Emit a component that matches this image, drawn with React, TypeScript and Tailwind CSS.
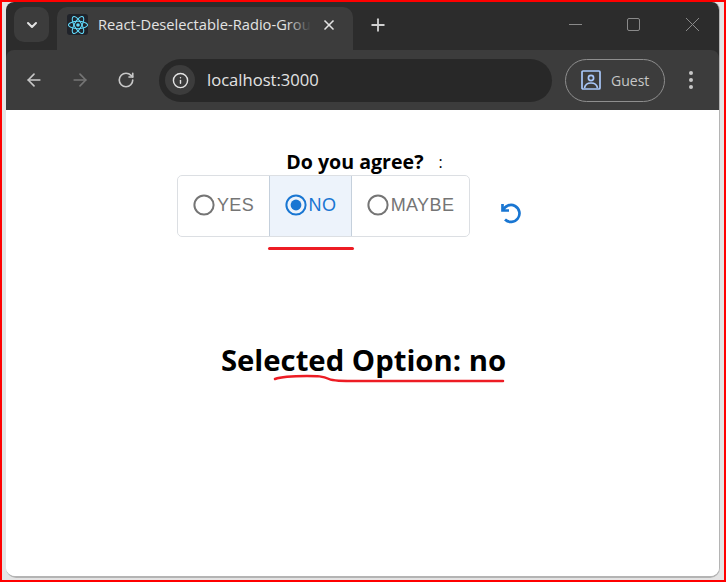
import React from 'react';
import { ArrowLeft, ArrowRight, ChevronDown, Info, Plus, RotateCw, X } from 'lucide-react';

const ReactLogo: React.FC = () => (
  <div className="flex h-[21px] w-[21px] items-center justify-center rounded-[3px] bg-[#20232a]">
    <svg width="20" height="18" viewBox="-11.5 -10.2 23 20.4" fill="none" stroke="#61dafb" strokeWidth="1.2">
      <circle r="2.05" fill="#61dafb" stroke="none" />
      <ellipse rx="11" ry="4.2" />
      <ellipse rx="11" ry="4.2" transform="rotate(60)" />
      <ellipse rx="11" ry="4.2" transform="rotate(120)" />
    </svg>
  </div>
);

const Radio: React.FC<{ label: string; checked?: boolean; width: string }> = ({ label, checked, width }) => (
  <div
    className={`flex h-full items-center justify-center pb-[2px] ${width} ${
      checked ? 'border-x border-[#c5d0dc] bg-[#edf3fb] text-[#1976d2]' : 'text-[#757575]'
    }`}
  >
    <svg width="22" height="22" viewBox="0 0 22 22" fill="none">
      <circle cx="11" cy="11" r="9.6" stroke={checked ? '#1976d2' : '#757575'} strokeWidth="2" />
      {checked && <circle cx="11" cy="11" r="5.4" fill="#1976d2" />}
    </svg>
    <span className="ml-[2px] text-[18px] leading-none tracking-[0.4px]">{label}</span>
  </div>
);

export default function App() {
  return (
    <div className="relative h-[582px] w-[726px] overflow-hidden border-2 border-[#ff0000] bg-[#e4e4e4] pb-[2px] pl-[4px] pr-[4px] font-['Liberation_Sans',sans-serif]">
      <div className="flex h-full flex-col overflow-hidden rounded-b-[10px] rounded-t-[8px] border-b-2 border-r border-[#b4b4b4] bg-white">
        <div className="bg-[#2c2c2c]">
          {/* Tab strip */}
          <div className="flex h-[48px] items-start pl-[8px] pt-[5px]">
            <div className="flex h-[35px] w-[35px] items-center justify-center rounded-[10px] bg-[#3c3c3c] text-[#e3e3e3]">
              <ChevronDown size={16} strokeWidth={3} />
            </div>
            <div className="ml-[8px] flex h-[43px] w-[296px] items-center rounded-t-[10px] bg-[#3c3c3c] pb-[8px] pl-[10px]">
              <ReactLogo />
              <div className="relative ml-[10px] w-[213px] overflow-hidden whitespace-nowrap font-['Open_Sans',sans-serif] text-[14.7px] text-[#e3e3e3]">
                React-Deselectable-Radio-Group
                <div className="absolute inset-y-0 right-0 w-[24px] bg-gradient-to-r from-transparent to-[#3c3c3c]" />
              </div>
              <X size={16} strokeWidth={2.5} className="ml-[10px] text-[#e3e3e3]" />
            </div>
            <Plus size={20} strokeWidth={2.2} className="ml-[15px] mt-[8px] text-[#d0d0d0]" />
            <svg className="ml-[181px] mt-[10px]" width="130" height="15" viewBox="0 0 130 15" fill="none" stroke="#8a8a8a" strokeWidth="1">
              <path d="M0 7.500h13" />
              <rect x="58.500" y="1.500" width="12" height="12" rx="1.500" />
              <path d="M117 1l13 13M130 1l-13 13" />
            </svg>
          </div>

          {/* Toolbar */}
          <div className="flex h-[60px] items-center rounded-t-[8px] bg-[#3c3c3c] pl-[18px]">
            <ArrowLeft size={20} strokeWidth={2} className="text-[#c7c7c7]" />
            <ArrowRight size={20} strokeWidth={2} className="ml-[26px] text-[#757575]" />
            <RotateCw size={18} strokeWidth={2.2} className="ml-[27px] text-[#c7c7c7]" />
            <div className="ml-[24px] flex h-[43px] w-[393px] items-center rounded-full bg-[#282828] pl-[6px]">
              <div className="flex h-[30px] w-[30px] items-center justify-center rounded-full bg-[#3c3c3c] text-[#e3e3e3]">
                <Info size={17} strokeWidth={2} />
              </div>
              <span className="ml-[12px] font-['Open_Sans',sans-serif] text-[16.6px] text-[#e3e3e3]">localhost:3000</span>
            </div>
            <div className="ml-[13px] flex h-[43px] w-[100px] items-center rounded-full border border-[#8e8e8e] pl-[15px]">
              <svg width="20" height="20" viewBox="0 0 20 20" fill="none" stroke="#a8c7fa" strokeWidth="1.7">
                <rect x="1" y="1" width="18" height="18" rx="1" />
                <circle cx="10" cy="8" r="2.600" />
                <path d="M3.500 18c.6-3.600 3-5 6.500-5s5.900 1.400 6.500 5" />
              </svg>
              <span className="ml-[10px] font-['Open_Sans',sans-serif] text-[14px] text-[#c7c7c7]">Guest</span>
            </div>
            <div className="ml-[24px] flex flex-col gap-[3px]">
              <div className="h-[4px] w-[4px] rounded-full bg-[#c7c7c7]" />
              <div className="h-[4px] w-[4px] rounded-full bg-[#c7c7c7]" />
              <div className="h-[4px] w-[4px] rounded-full bg-[#c7c7c7]" />
            </div>
          </div>
        </div>

        {/* Page */}
        <div className="flex flex-1 flex-col items-center bg-white font-['Open_Sans',sans-serif] text-black">
          <div className="mt-[39px] flex h-[26px] items-center pl-[4px] text-[19.6px] leading-none">
            <span className="font-bold">Do you agree?</span>
            <span className="ml-[15px] text-[16px]">:</span>
          </div>
          <div className="flex w-full items-center pl-[171px]">
            <div className="relative flex h-[62px] w-[293px] items-center rounded-[5px] border border-[#dcdfe3] font-['Liberation_Sans',sans-serif]">
              <Radio label="YES" width="w-[91px]" />
              <Radio label="NO" checked width="w-[83px]" />
              <Radio label="MAYBE" width="flex-1" />
              <div className="absolute left-[90px] top-[71px] h-[3px] w-[86px] rounded-full bg-[#ed1c24]" />
            </div>
            <svg className="ml-[29px] mt-[14px]" width="24" height="24" viewBox="0 0 24 24" fill="none" stroke="#1976d2" strokeWidth="2.700">
              <path d="M3.500 3v6.500H10" />
              <path d="M4 9.500A8.500 8.500 0 1 1 6 18.500" />
            </svg>
          </div>
          <div className="relative mt-[100px] pl-[2px] text-[29.3px] font-bold leading-[46px]">
            Selected Option: no
            <svg className="absolute left-0 top-0 overflow-visible" width="290" height="50" fill="none" stroke="#ed1c24" strokeWidth="2.500" strokeLinecap="round">
              <path d="M56 42c8-3 20-3 32-3 10 0 16 0 22 3 4 2 12 2 30 2h144" />
            </svg>
          </div>
        </div>
      </div>
    </div>
  );
}
